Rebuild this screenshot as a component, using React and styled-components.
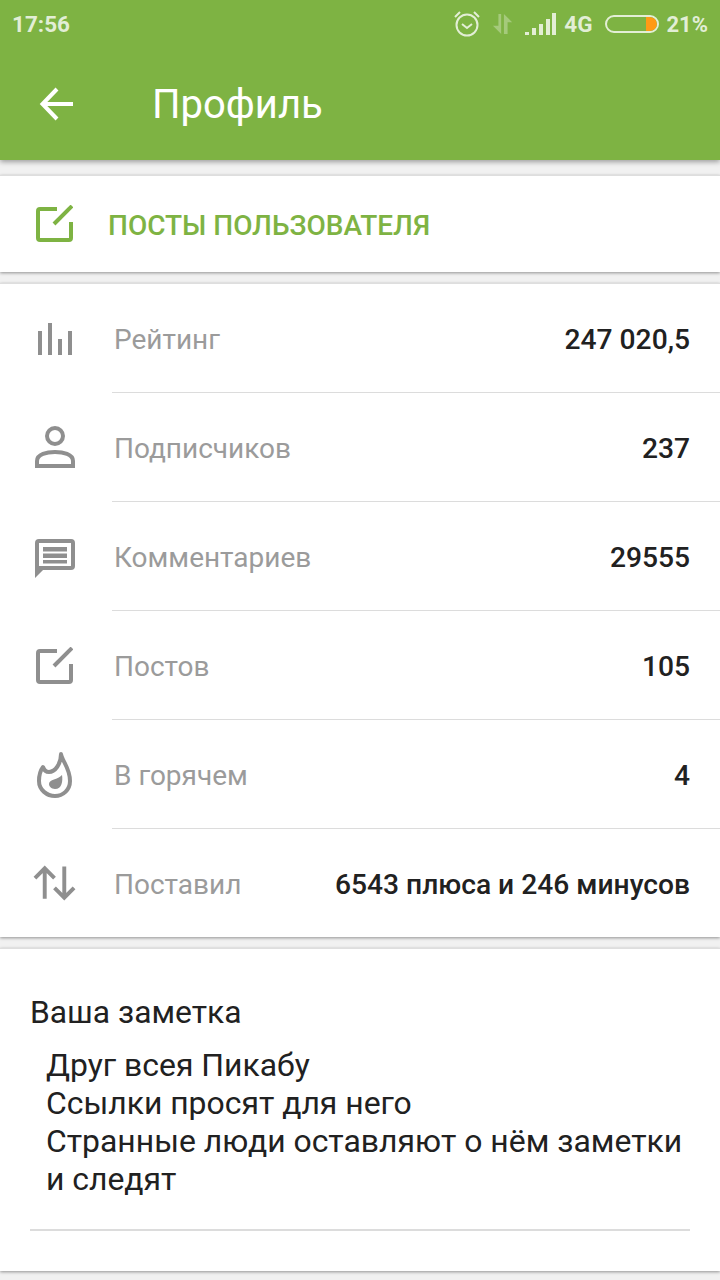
import React from "react";
import styled, { createGlobalStyle } from "styled-components";

const GlobalStyle = createGlobalStyle`
	html, body {
		margin: 0;
		padding: 0;
		background: #f1f1f1;
	}
	body {
		font-family: Roboto, "Noto Sans", sans-serif;
	}
`;

const Page = styled.div`
	width: 720px;
	height: 1280px;
	overflow: hidden;
	background: #f1f1f1;
`;

const Header = styled.header`
	height: 160px;
	background: #7eb343;
	box-shadow: 0 2px 5px rgba(0, 0, 0, 0.35);
`;

const StatusBar = styled.div`
	height: 48px;
	padding: 0 12px;
	display: flex;
	align-items: center;
	justify-content: space-between;
	box-sizing: border-box;
	color: rgba(255, 255, 255, 0.78);
	font-size: 22.500px;
	font-weight: 700;
`;

const StatusIcons = styled.div`
	display: flex;
	align-items: center;
`;

const DataSlot = styled.div`
	display: flex;
	margin-left: 11px;
`;

const SignalSlot = styled.div`
	display: flex;
	margin-left: 11px;
`;

const NetText = styled.span`
	margin-left: 8px;
`;

const BatteryShell = styled.div`
	width: 54px;
	height: 18px;
	margin-left: 13px;
	box-sizing: border-box;
	border: 2px solid rgba(255, 255, 255, 0.78);
	border-radius: 9px;
	display: flex;
	justify-content: flex-end;
	overflow: hidden;
`;

const BatteryFill = styled.div`
	width: 11px;
	background: #ff9a15;
	border-radius: 0 7px 7px 0;
`;

const Percent = styled.span`
	margin-left: 7px;
	font-size: 22px;
`;

const Toolbar = styled.div`
	height: 112px;
	display: flex;
	align-items: center;
	padding-left: 38px;
	box-sizing: border-box;
`;

const Title = styled.h1`
	margin: 0 0 0 76px;
	color: #fff;
	font-size: 40px;
	font-weight: 400;
`;

const Card = styled.section`
	margin-top: ${p => p.$gap}px;
	background: #fff;
	border-top: 1px solid #dedede;
	box-shadow: 0 1px 3px rgba(0, 0, 0, 0.4);
`;

const PostsLink = styled.div`
	height: 96px;
	display: flex;
	align-items: center;
	box-sizing: border-box;
	padding: 2px 0 0 36px;
	gap: 35px;
	color: #7eb343;
	font-size: 28px;
	font-weight: 500;
	svg {
		margin-bottom: 4px;
	}
`;

const Row = styled.div`
	height: ${p => (p.$last ? 108 : 109)}px;
	display: flex;
	align-items: stretch;
`;

const IconCell = styled.div`
	width: 112px;
	flex: none;
	display: flex;
	align-items: center;
	justify-content: center;
	padding: 0 35px 0 32px;
	box-sizing: border-box;
`;

const RowBody = styled.div`
	flex: 1;
	display: flex;
	align-items: center;
	justify-content: space-between;
	padding: 2px 30px 0 2px;
	border-bottom: ${p => (p.$last ? "none" : "1px solid #dcdcdc")};
`;

const Label = styled.span`
	color: #9b9b9b;
	font-size: 28px;
`;

const Value = styled.span`
	color: #212121;
	font-size: 28.200px;
	font-weight: 500;
`;

const NoteCard = styled(Card)`
	height: 323px;
	box-sizing: border-box;
	padding: 44px 30px 0;
`;

const NoteTitle = styled.div`
	color: #212121;
	font-size: 31.800px;
	line-height: 38px;
`;

const NoteText = styled.div`
	margin-top: 15px;
	padding: 0 0 31px 16px;
	color: #212121;
	font-size: 31.900px;
	line-height: 38px;
`;

const NoteLine = styled.div`
	height: 2px;
	background: #dcdcdc;
`;

const BackIcon = () => (
	<svg width="38" height="38" viewBox="0 0 38 38" fill="none" stroke="#fff" strokeWidth="4">
		<path d="M35 19H5M19 4L4.500 19 19 34" />
	</svg>
);

const EditIcon = ({ color }) => (
	<svg width="37" height="37" viewBox="0 0 37 37" fill="none" stroke={color} strokeWidth="4">
		<path d="M21 4H4a2 2 0 0 0-2 2v27a2 2 0 0 0 2 2h29a2 2 0 0 0 2-2V17" strokeLinejoin="round" />
		<path d="M18 19L36 1" />
	</svg>
);

const BarsIcon = () => (
	<svg width="34" height="32" viewBox="0 0 34 32" fill="#8f8f8f">
		<rect x="0" y="8" width="4" height="24" />
		<rect x="10" y="0" width="4" height="32" />
		<rect x="20" y="16" width="4" height="16" />
		<rect x="30" y="8" width="4" height="24" />
	</svg>
);

const PersonIcon = () => (
	<svg width="40" height="44" viewBox="0 0 40 44" fill="none" stroke="#8f8f8f" strokeWidth="4">
		<circle cx="20" cy="10" r="8" />
		<path d="M2 40v-5c0-7 10-9 18-9s18 2 18 9v5z" />
	</svg>
);

const CommentIcon = () => (
	<svg width="40" height="42" viewBox="0 -3 40 42" fill="none">
		<path d="M2 29V4a2 2 0 0 1 2-2h32a2 2 0 0 1 2 2v23a2 2 0 0 1-2 2H4" stroke="#8f8f8f" strokeWidth="4" />
		<path d="M0 27v12l10-10zM8 8h24v4.500H8zM8 14.500h24V19H8zM8 21h24v3.500H8z" fill="#8f8f8f" />
	</svg>
);

const FireIcon = () => (
	<svg width="36" height="48" viewBox="0 0 36 48" fill="none">
		<path
			d="M24 3c1 7 9 14 9 27 0 9-7 15-15 15S2 39 2 30c0-5 1-10 4-14 1 3 3 5 6 5 6 0 12-8 12-18z"
			stroke="#8f8f8f"
			strokeWidth="4"
			strokeLinejoin="round"
		/>
		<path d="M25 24c1 6 0 14-7 14-4 0-6-3-6-5 0-5 9-4 13-9z" fill="#8f8f8f" />
	</svg>
);

const SortIcon = () => (
	<svg width="43" height="36" viewBox="0 0 44 36" fill="none" stroke="#8f8f8f" strokeWidth="4">
		<path d="M12 34V3M2 13L12 3l10 10" />
		<path d="M32 1v32M22 23l10 10 10-10" />
	</svg>
);

const AlarmIcon = () => (
	<svg width="28" height="28" viewBox="0 0 28 28" fill="none" stroke="rgba(255,255,255,.78)" strokeWidth="2">
		<circle cx="14" cy="15" r="10.500" />
		<path d="M9 14l5 4 5-4M2 7l5-5M26 7l-5-5" />
	</svg>
);

const DataIcon = () => (
	<svg width="22" height="24" viewBox="0 0 24 24" fill="rgba(255,255,255,.3)">
		<path d="M10 1v22L1 14h6V1zM13 1l9 9h-5v13h-4z" />
	</svg>
);

const SignalIcon = () => (
	<svg width="31" height="22" viewBox="0 0 31 22" fill="rgba(255,255,255,.78)">
		<path d="M0 19h4v3H0zM7 15h4v7H7zM14 11h4v11h-4zM21 6h4v16h-4zM27 0h4v22h-4z" />
	</svg>
);

const stats = [
	{ label: "Рейтинг", value: "247 020,5", icon: <BarsIcon /> },
	{ label: "Подписчиков", value: "237", icon: <PersonIcon /> },
	{ label: "Комментариев", value: "29555", icon: <CommentIcon /> },
	{ label: "Постов", value: "105", icon: <EditIcon color="#8f8f8f" /> },
	{ label: "В горячем", value: "4", icon: <FireIcon /> },
	{ label: "Поставил", value: "6543 плюса и 246 минусов", icon: <SortIcon /> }
];

const App = () => {
	return (
		<Page>
			<GlobalStyle />
			<Header>
				<StatusBar>
					<span>17:56</span>
					<StatusIcons>
						<AlarmIcon />
						<DataSlot>
							<DataIcon />
						</DataSlot>
						<SignalSlot>
							<SignalIcon />
						</SignalSlot>
						<NetText>4G</NetText>
						<BatteryShell>
							<BatteryFill />
						</BatteryShell>
						<Percent>21%</Percent>
					</StatusIcons>
				</StatusBar>
				<Toolbar>
					<BackIcon />
					<Title>Профиль</Title>
				</Toolbar>
			</Header>
			<Card $gap={15}>
				<PostsLink>
					<EditIcon color="#7eb343" />
					ПОСТЫ ПОЛЬЗОВАТЕЛЯ
				</PostsLink>
			</Card>
			<Card $gap={11}>
				{stats.map((s, i) => (
					<Row key={s.label} $last={i == stats.length - 1}>
						<IconCell>{s.icon}</IconCell>
						<RowBody $last={i == stats.length - 1}>
							<Label>{s.label}</Label>
							<Value>{s.value}</Value>
						</RowBody>
					</Row>
				))}
			</Card>
			<NoteCard $gap={11}>
				<NoteTitle>Ваша заметка</NoteTitle>
				<NoteText>
					Друг всея Пикабу
					<br />
					Ссылки просят для него
					<br />
					Странные люди оставляют о нём заметки и следят
				</NoteText>
				<NoteLine />
			</NoteCard>
		</Page>
	);
};

export default App;
